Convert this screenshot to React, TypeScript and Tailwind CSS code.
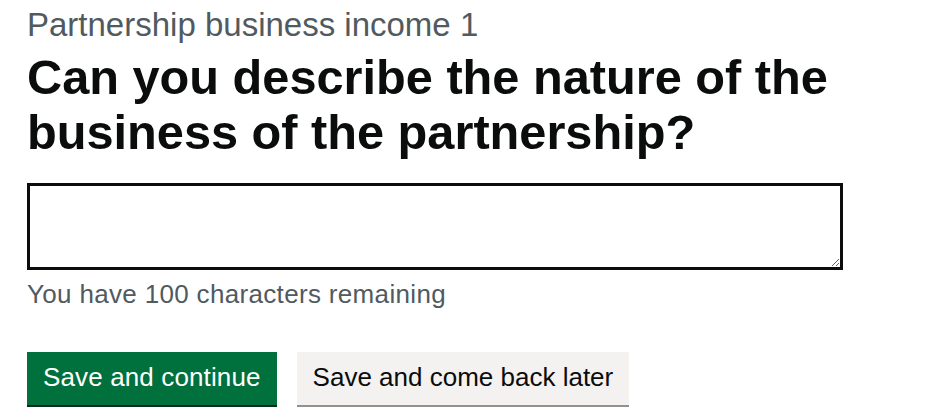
export default function App() {
  return (
    <div
      className="min-h-screen bg-white pl-[27px] pt-[4px] text-[#0b0c0c]"
      style={{ fontFamily: '"Liberation Sans", Arial, sans-serif' }}
    >
      <span className="block text-[33px] leading-[41px] text-[#505a5f]">
        Partnership business income 1
      </span>
      <h1 className="mt-[5px] text-[48.7px] font-bold leading-[55px]">
        Can you describe the nature of the
        <br />
        business of the partnership?
      </h1>
      <textarea
        aria-label="Nature of the business"
        className="mt-[23px] block h-[87px] w-[816px] rounded-none border-[3px] border-[#0b0c0c] bg-white p-[7px] text-[26px] outline-none"
      />
      <p className="mt-[7px] text-[26px] leading-[34px] tracking-[0.33px] text-[#505a5f]">
        You have 100 characters remaining
      </p>
      <div className="mt-[41px] flex gap-[20px]">
        <button className="flex h-[53px] items-center bg-[#00703c] px-[16px] pb-[2px] text-[26px] tracking-[0.13px] text-white shadow-[0_2px_0_#002d18]">
          Save and continue
        </button>
        <button className="flex h-[53px] items-center bg-[#f3f2f1] px-[16px] pb-[2px] text-[26px] text-[#0b0c0c] shadow-[0_2px_0_#929191]">
          Save and come back later
        </button>
      </div>
    </div>
  );
}
